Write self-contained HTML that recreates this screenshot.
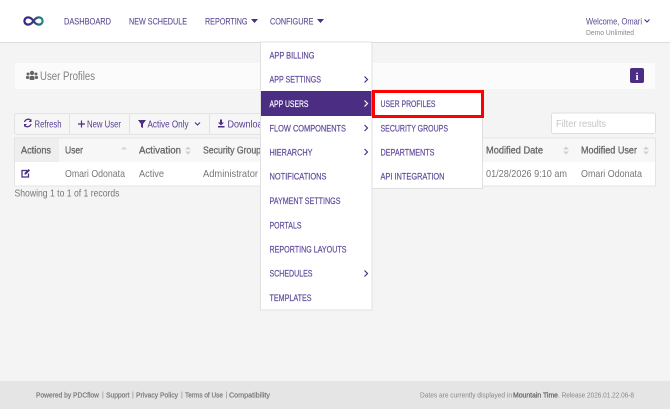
<!DOCTYPE html>
<html><head><meta charset="utf-8"><style>
html,body{margin:0;padding:0;background:#f4f4f4}
svg{display:block}
text{font-family:"Liberation Sans",sans-serif}
.n{font-size:9.5px;fill:#5b4a91;stroke:#5b4a91;stroke-width:.1px}
.m{font-size:9.5px;fill:#5f4a9a;stroke:#5f4a9a;stroke-width:.2px}
.b{font-size:10.5px;fill:#553c94}
.h{font-size:10.500px;fill:#666;stroke:#666;stroke-width:.3px}
.c{font-size:10.5px;fill:#777}
.f{font-size:7.5px;fill:#777;stroke:#777;stroke-width:.2px}
.s{fill:#cfcfcf}
</style></head><body>
<svg width="670" height="409" viewBox="0 0 670 409" xmlns="http://www.w3.org/2000/svg">
<defs><linearGradient id="g" x1="0" x2="1" y1="0" y2="0"><stop offset="0" stop-color="#3b1f8f"/><stop offset=".5" stop-color="#3a3a7a"/><stop offset="1" stop-color="#1f8a80"/></linearGradient></defs>
<rect width="670" height="409" fill="#f4f4f4"/>
<rect width="670" height="42" fill="#fff"/><rect y="42" width="670" height="1" fill="#dcdcdc"/>
<path d="M33.500 21c-2-3-4-3.600-5.500-3.600a3.600 3.600 0 0 0 0 7.200c1.500 0 3.500-.6 5.500-3.600s4-3.600 5.500-3.600a3.600 3.600 0 0 1 0 7.200c-1.500 0-3.500-.6-5.500-3.600z" fill="none" stroke="url(#g)" stroke-width="2.200"/>
<text class="n" x="64" y="24.500" textLength="47" lengthAdjust="spacingAndGlyphs">DASHBOARD</text>
<text class="n" x="129" y="24.500" textLength="58" lengthAdjust="spacingAndGlyphs">NEW SCHEDULE</text>
<text class="n" x="205" y="24.500" textLength="42.500" lengthAdjust="spacingAndGlyphs">REPORTING</text>
<path d="M251 19h7l-3.500 4z" fill="#4b2e83"/>
<text class="n" x="270" y="24.500" textLength="43.500" lengthAdjust="spacingAndGlyphs">CONFIGURE</text>
<path d="M317 19h7l-3.500 4z" fill="#4b2e83"/>
<text x="586" y="24.500" font-size="9.500" fill="#5b4a91" textLength="56" lengthAdjust="spacingAndGlyphs">Welcome, Omari</text>
<path d="M644.500 19.500l2.500 2.500 2.500-2.500" fill="none" stroke="#4b2e83" stroke-width="1.100"/>
<text x="586" y="35" font-size="7.500" fill="#888" textLength="48" lengthAdjust="spacingAndGlyphs">Demo Unlimited</text>

<rect x="15" y="63" width="640" height="26" fill="#fbfbfb"/>
<g fill="#666"><circle cx="32" cy="73" r="2.200"/><circle cx="28" cy="74" r="1.500"/><circle cx="36" cy="74" r="1.500"/><rect x="29.500" y="76" width="5" height="4" rx="1"/><rect x="26" y="76" width="3" height="3" rx="1"/><rect x="35" y="76" width="3" height="3" rx="1"/></g>
<text x="40" y="80" font-size="11.500" fill="#808080" textLength="55" lengthAdjust="spacingAndGlyphs">User Profiles</text>
<rect x="630" y="68" width="14" height="15" rx="2" fill="#4b2e83"/>
<text x="637" y="80" font-size="11" fill="#fff" font-weight="bold" text-anchor="middle" style="font-family:'Liberation Serif',serif">i</text>

<rect x="14.500" y="113.500" width="262" height="21" rx="2" fill="#f6f6f6" stroke="#e2e2e2"/>
<rect x="69" y="114" width="1" height="20" fill="#e2e2e2"/><rect x="129" y="114" width="1" height="20" fill="#e2e2e2"/><rect x="209" y="114" width="1" height="20" fill="#e2e2e2"/>
<path d="M31 120.500a3.800 3.800 0 0 0-6.500 1.500M24.500 125.500a3.800 3.800 0 0 0 6.500-1.500" fill="none" stroke="#4b2e83" stroke-width="1.300"/>
<path d="M31.500 119v3h-3zM24 127v-3h3z" fill="#4b2e83"/>
<text class="b" x="34.500" y="127.500" textLength="27" lengthAdjust="spacingAndGlyphs">Refresh</text>
<path d="M78 124h7M81.500 120.500v7" stroke="#4b2e83" stroke-width="1.200"/>
<text class="b" x="87" y="127.500" textLength="34" lengthAdjust="spacingAndGlyphs">New User</text>
<path d="M138 120h8l-3 4v4l-2-1v-3z" fill="#4b2e83"/>
<text class="b" x="147.500" y="127.500" textLength="41" lengthAdjust="spacingAndGlyphs">Active Only</text>
<path d="M195 122.500l2.500 2.500 2.500-2.500" fill="none" stroke="#4b2e83" stroke-width="1.100"/>
<path d="M220 119.500h2v3h2l-3 3-3-3h2zM218 126h6.500v1.500H218z" fill="#4b2e83"/>
<text class="b" x="227.500" y="127.500" textLength="40" lengthAdjust="spacingAndGlyphs">Download</text>

<rect x="551.500" y="113" width="104" height="20.500" rx="2" fill="#fff" stroke="#dedede"/>
<text x="556" y="127" font-size="10.500" fill="#c4c4c4" textLength="50" lengthAdjust="spacingAndGlyphs">Filter results</text>

<rect x="14.500" y="138" width="641" height="48" fill="#fff" stroke="#e4e4e4"/>
<rect x="15" y="138.500" width="640" height="23.500" fill="#f7f7f7"/>
<rect x="15" y="138.500" width="44" height="23.500" fill="#eee"/>
<text class="h" x="21" y="153.500" textLength="30" lengthAdjust="spacingAndGlyphs">Actions</text>
<text class="h" x="65" y="153.500" textLength="18" lengthAdjust="spacingAndGlyphs">User</text>
<path d="M121 149.500l3-3 3 3z" fill="#d6d6d6"/>
<text class="h" x="139" y="153.500" textLength="42" lengthAdjust="spacingAndGlyphs">Activation</text>
<path class="s" d="M185 149.500l3-3 3 3zM185 151.500l3 3 3-3z"/>
<text class="h" x="203" y="153.500" textLength="58" lengthAdjust="spacingAndGlyphs">Security Group</text>
<text class="h" x="486" y="153.500" textLength="57" lengthAdjust="spacingAndGlyphs">Modified Date</text>
<path class="s" d="M563 149.500l3-3 3 3zM563 151.500l3 3 3-3z"/>
<text class="h" x="581" y="153.500" textLength="56" lengthAdjust="spacingAndGlyphs">Modified User</text>
<path class="s" d="M643 149.500l3-3 3 3zM643 151.500l3 3 3-3z"/>
<path d="M27 170.500h-5v6.500h6.500v-3.500" fill="none" stroke="#4b2e83" stroke-width="1.300"/>
<path d="M24.500 173l4-4 1.500 1.500-4 4h-1.500z" fill="#4b2e83"/>
<text class="c" x="65" y="177" textLength="60" lengthAdjust="spacingAndGlyphs">Omari Odonata</text>
<text class="c" x="139" y="177" textLength="25" lengthAdjust="spacingAndGlyphs">Active</text>
<text class="c" x="203" y="177" textLength="55" lengthAdjust="spacingAndGlyphs">Administrator</text>
<text class="c" x="486" y="177" textLength="81" lengthAdjust="spacingAndGlyphs">01/28/2026 9:10 am</text>
<text class="c" x="581" y="177" textLength="61" lengthAdjust="spacingAndGlyphs">Omari Odonata</text>
<text class="c" x="14.500" y="196.500" textLength="105" lengthAdjust="spacingAndGlyphs">Showing 1 to 1 of 1 records</text>

<rect x="260.500" y="42" width="111.500" height="268" fill="#fff" stroke="#e0e0e0"/>
<rect x="261" y="91" width="111" height="25" fill="#4b2e83"/>
<text class="m" x="269.500" y="58.500" textLength="45" lengthAdjust="spacingAndGlyphs">APP BILLING</text>
<text class="m" x="269.500" y="82.500" textLength="51.500" lengthAdjust="spacingAndGlyphs">APP SETTINGS</text>
<text x="269.500" y="107" font-size="9.500" fill="#fff" stroke="#fff" stroke-width=".2" textLength="39" lengthAdjust="spacingAndGlyphs">APP USERS</text>
<text class="m" x="269.500" y="131.500" textLength="76.500" lengthAdjust="spacingAndGlyphs">FLOW COMPONENTS</text>
<text class="m" x="269.500" y="155.500" textLength="43" lengthAdjust="spacingAndGlyphs">HIERARCHY</text>
<text class="m" x="269.500" y="179.500" textLength="57" lengthAdjust="spacingAndGlyphs">NOTIFICATIONS</text>
<text class="m" x="269.500" y="204" textLength="71" lengthAdjust="spacingAndGlyphs">PAYMENT SETTINGS</text>
<text class="m" x="269.500" y="228.500" textLength="32" lengthAdjust="spacingAndGlyphs">PORTALS</text>
<text class="m" x="269.500" y="252.500" textLength="77" lengthAdjust="spacingAndGlyphs">REPORTING LAYOUTS</text>
<text class="m" x="269.500" y="276.500" textLength="43" lengthAdjust="spacingAndGlyphs">SCHEDULES</text>
<text class="m" x="269.500" y="301" textLength="42" lengthAdjust="spacingAndGlyphs">TEMPLATES</text>
<g fill="none" stroke="#4b2e83" stroke-width="1.200">
<path d="M364.500 76.500l3 3-3 3"/><path d="M364.500 125l3 3-3 3"/><path d="M364.500 149l3 3-3 3"/><path d="M364.500 270.500l3 3-3 3"/>
</g>
<path d="M364.500 100.500l3 3-3 3" fill="none" stroke="#fff" stroke-width="1.200"/>

<rect x="372" y="91" width="110.500" height="97.500" fill="#fff" stroke="#dfdfdf"/>
<rect x="373.500" y="91.500" width="109" height="25" fill="#fff" stroke="#f00" stroke-width="3"/>
<text class="m" x="380.500" y="107" textLength="55" lengthAdjust="spacingAndGlyphs">USER PROFILES</text>
<text class="m" x="380.500" y="131.500" textLength="67.500" lengthAdjust="spacingAndGlyphs">SECURITY GROUPS</text>
<text class="m" x="380.500" y="155.500" textLength="54" lengthAdjust="spacingAndGlyphs">DEPARTMENTS</text>
<text class="m" x="380.500" y="179.500" textLength="64" lengthAdjust="spacingAndGlyphs">API INTEGRATION</text>

<rect y="381" width="670" height="28" fill="#e5e5e5"/>
<text class="f" x="36" y="397.500" textLength="63" lengthAdjust="spacingAndGlyphs">Powered by PDCflow</text>
<text x="102" y="397" font-size="7" fill="#888">|</text>
<text class="f" x="106" y="397.500" textLength="23.500" lengthAdjust="spacingAndGlyphs">Support</text>
<text x="132" y="397" font-size="7" fill="#888">|</text>
<text class="f" x="136" y="397.500" textLength="42" lengthAdjust="spacingAndGlyphs">Privacy Policy</text>
<text x="181" y="397" font-size="7" fill="#888">|</text>
<text class="f" x="185" y="397.500" textLength="38" lengthAdjust="spacingAndGlyphs">Terms of Use</text>
<text x="225.500" y="397" font-size="7" fill="#888">|</text>
<text class="f" x="229" y="397.500" textLength="41" lengthAdjust="spacingAndGlyphs">Compatibility</text>
<text x="420" y="397.500" font-size="7.500" fill="#888" textLength="92" lengthAdjust="spacingAndGlyphs">Dates are currently displayed in</text>
<text x="513" y="397.500" font-size="7.500" fill="#666" stroke="#666" stroke-width=".25" textLength="45" lengthAdjust="spacingAndGlyphs">Mountain Time</text>
<text x="558" y="397.500" font-size="7.500" fill="#888" textLength="76" lengthAdjust="spacingAndGlyphs">. Release 2026.01.22.06-8</text>
</svg>
</body></html>
